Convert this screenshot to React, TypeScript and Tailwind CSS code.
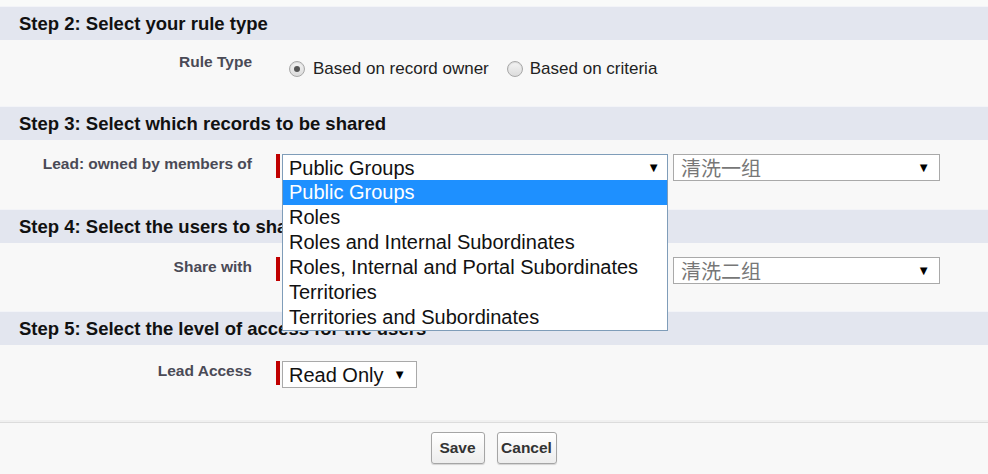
import React from "react";

const font = { fontFamily: '"Liberation Sans", Arial, sans-serif' };

const Header = ({ title }: { title: string }) => (
  <div className="h-[34px] bg-[#e3e6ef] border-t border-[#f3f4f8] flex items-center pl-[19px] text-[18.5px] font-bold text-[#111]">
    {title}
  </div>
);

const Label = ({ text }: { text: string }) => (
  <div className="w-[252px] shrink-0 text-right text-[15.5px] font-bold text-[#4a4a56] leading-[16px]">{text}</div>
);

const RedBar = () => <div className="w-[4px] h-[24px] bg-[#c00000] ml-[24px] mr-[2px]" />;

const Arrow = () => <span className="text-[13px] text-black leading-none">▼</span>;

const Radio = ({ checked }: { checked?: boolean }) => (
  <div className="w-[16px] h-[16px] rounded-full border border-[#a8a8a8] bg-gradient-to-b from-[#f4f4f4] to-[#dcdcdc] flex items-center justify-center shadow-[inset_0_1px_1px_rgba(0,0,0,0.1)]">
    {checked && <div className="w-[6px] h-[6px] rounded-full bg-[#555]" />}
  </div>
);

const CnSelect = ({ text }: { text: string }) => (
  <div className="ml-[5px] w-[267px] h-[27px] bg-white border border-[#a9a9a9] flex items-center justify-between pl-[7px] pr-[9px]">
    <span className="text-[20px] text-[#777] leading-none" style={{ fontFamily: '"Noto Sans CJK SC", serif' }}>{text}</span>
    <Arrow />
  </div>
);

const options = [
  "Public Groups",
  "Roles",
  "Roles and Internal Subordinates",
  "Roles, Internal and Portal Subordinates",
  "Territories",
  "Territories and Subordinates",
];

export default function App() {
  return (
    <div className="w-[988px] h-[474px] bg-[#f8f8f8] overflow-hidden" style={font}>
      <div className="h-[6px] bg-[#f9faf9]" />
      <Header title="Step 2: Select your rule type" />
      <div className="h-[66px] flex pt-[14px]">
        <Label text="Rule Type" />
        <div className="flex items-center ml-[37px] h-[24px] self-start pt-[6px]">
          <Radio checked />
          <span className="ml-[8px] text-[17px] text-[#222]">Based on record owner</span>
          <div className="ml-[18px]"><Radio /></div>
          <span className="ml-[7px] text-[17px] text-[#222]">Based on criteria</span>
        </div>
      </div>

      <Header title="Step 3: Select which records to be shared" />
      <div className="h-[69px] flex pt-[14px] relative z-10">
        <div className="pt-[2px]"><Label text="Lead: owned by members of" /></div>
        <RedBar />
        <div className="relative">
          <div className="w-[386px] h-[27px] bg-white border border-[#7f9db9] flex items-center justify-between pl-[6px] pr-[7px]">
            <span className="text-[20px] text-[#111] leading-none">Public Groups</span>
            <Arrow />
          </div>
          <div className="absolute left-0 top-[26px] w-[386px] bg-white border border-[#7f9db9] border-t-0">
            {options.map((o, i) => (
              <div
                key={i}
                className={
                  i === 0
                    ? "h-[25px] bg-[#1e90ff] text-white pl-[6px] text-[20px] leading-[25px]"
                    : "h-[25px] text-[#111] pl-[6px] text-[20px] leading-[25px]"
                }
              >
                {o}
              </div>
            ))}
          </div>
        </div>
        <CnSelect text="清洗一组" />
      </div>

      <Header title="Step 4: Select the users to share with" />
      <div className="h-[68px] flex pt-[14px]">
        <div className="pt-[2px]"><Label text="Share with" /></div>
        <RedBar />
        <div className="w-[386px]" />
        <CnSelect text="清洗二组" />
      </div>

      <Header title="Step 5: Select the level of access for the users" />
      <div className="h-[75px] flex pt-[16px]">
        <div className="pt-[2px]"><Label text="Lead Access" /></div>
        <RedBar />
        <div className="w-[135px] h-[27px] bg-white border border-[#a9a9a9] flex items-center justify-between pl-[6px] pr-[10px]">
          <span className="text-[20px] text-[#111] leading-none">Read Only</span>
          <Arrow />
        </div>
      </div>

      <div className="h-[2px] bg-[#f0f0f0]" />
      <div className="border-t border-[#dcdcdc] h-[52px] flex justify-center items-start pt-[9px] gap-[12px] pr-[1px]">
        <button className="w-[54px] h-[32px] rounded-[3px] border border-[#a5a5a5] bg-gradient-to-b from-white to-[#ededed] text-[15.5px] font-bold text-[#333] shadow-[0_1px_1px_rgba(0,0,0,0.15)]">
          Save
        </button>
        <button className="w-[60px] h-[32px] rounded-[3px] border border-[#a5a5a5] bg-gradient-to-b from-white to-[#ededed] text-[15.5px] font-bold text-[#333] shadow-[0_1px_1px_rgba(0,0,0,0.15)]">
          Cancel
        </button>
      </div>
    </div>
  );
}
